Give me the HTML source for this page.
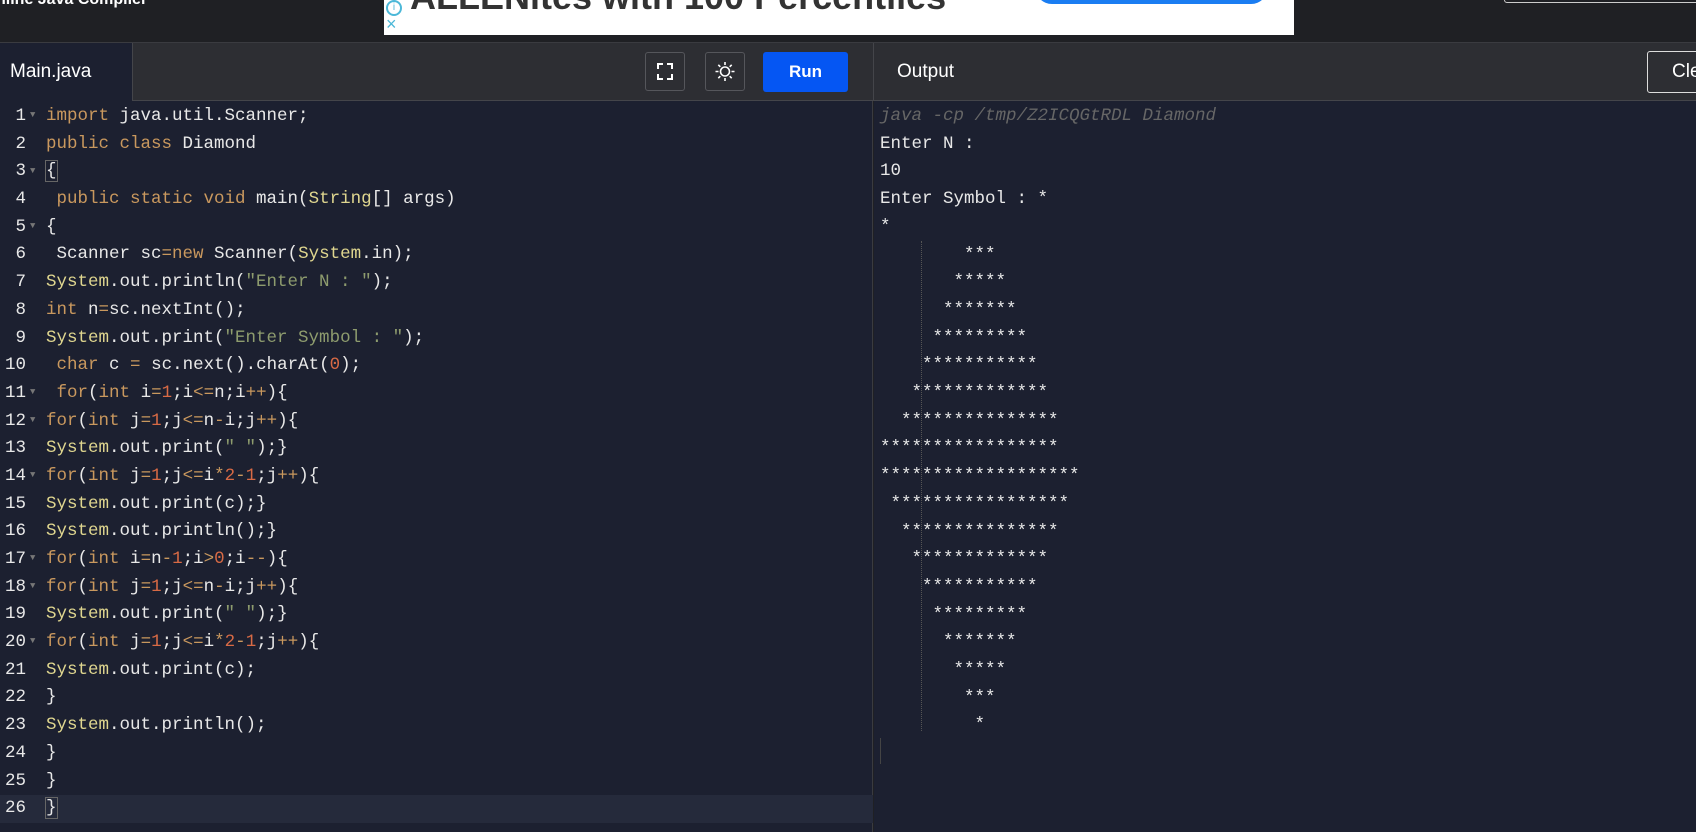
<!DOCTYPE html>
<html><head><meta charset="utf-8"><style>
*{margin:0;padding:0;box-sizing:border-box}
body{width:1696px;height:832px;overflow:hidden;background:#1f2024;font-family:"Liberation Sans",sans-serif;position:relative}
.top{position:absolute;left:0;top:0;width:1696px;height:43px;background:#1f2024;border-bottom:1px solid #3a3b40}
.ad{position:absolute;left:384px;top:0;width:910px;height:35px;background:#fff;overflow:hidden}
.hdr{position:absolute;top:43px;left:0;width:1696px;height:58px;background:#2d2e33;border-bottom:1px solid #44454a}
.tab{position:absolute;left:0;top:0;width:133px;height:58px;background:#1c2030;border-right:1px solid #44454a;color:#fff;font-size:19px;line-height:58px;padding-left:10px}
.btn{position:absolute;top:9px;width:40px;height:39px;border:1px solid #55565b;border-radius:3px;background:#2d2e33}
.run{position:absolute;left:763px;top:9px;width:85px;height:40px;background:#0556f3;border-radius:3px;color:#fff;font-weight:bold;font-size:17px;text-align:center;line-height:40px}
.ed{position:absolute;left:0;top:101px;width:873px;height:731px;background:#1c2030;border-right:1px solid #3a3b40}
.out{position:absolute;left:874px;top:101px;width:822px;height:731px;background:#1c2030}
.code{position:absolute;left:0;top:2px;font-family:"Liberation Mono",monospace;font-size:17.5px;line-height:27.7px;color:#e8e8e8}
.ln{display:inline-block;width:26px;text-align:right;color:#e8e8e8}
.f{display:inline-block;width:20px;color:#777;font-size:9px;padding-left:4px;vertical-align:middle;line-height:10px}
.k{color:#c9985e}.s{color:#8e9c6e}.n{color:#d86a45}.y{color:#dfd68f}
.row{height:27.7px;white-space:pre}
.act{background:#252a3b}
.o{position:absolute;left:6px;top:2px;font-family:"Liberation Mono",monospace;font-size:17.5px;line-height:27.7px;color:#e8e8e8;white-space:pre}
</style></head><body>
<div class="top">
<div style="position:absolute;left:-4px;top:-9px;color:#fff;font-size:16px;font-weight:bold">nline Java Compiler</div>
<div class="ad">
<div style="position:absolute;left:2px;top:0;width:16px;height:16px;border-radius:50%;border:2px solid #4cb8d8;color:#4cb8d8;font-size:10px;text-align:center;line-height:12px">i</div>
<div style="position:absolute;left:2px;top:14px;color:#4cb8d8;font-size:18px">×</div>
<div style="position:absolute;left:26px;top:-24px;color:#333;font-size:36px;font-weight:bold;white-space:nowrap">ALLENites with 100 Percentiles</div>
<div style="position:absolute;left:651px;top:-30px;width:233px;height:34px;border-radius:17px;background:#1a7df2"></div>
</div>
<div style="position:absolute;left:1504px;top:-10px;width:200px;height:13px;border:1px solid #ccc;border-radius:3px"></div>
</div>
<div class="hdr">
<div class="tab">Main.java</div>
<div class="btn" style="left:645px"><svg width="38" height="37" viewBox="0 0 38 37"><path d="M12 16v-5h5M21 11h5v5M26 21v5h-5M17 26h-5v-5" stroke="#fff" stroke-width="2" fill="none"/></svg></div>
<div class="btn" style="left:705px"><svg width="38" height="37" viewBox="0 0 38 37"><circle cx="19" cy="18.5" r="4.5" stroke="#fff" stroke-width="1.6" fill="none"/><path d="M19 9v3M19 25v3M9.5 18.5h3M25.5 18.5h3M12.3 11.8l2 2M23.7 23.2l2 2M12.3 25.2l2-2M23.7 13.8l2-2" stroke="#fff" stroke-width="1.6"/></svg></div>
<div class="run">Run</div>
<div style="position:absolute;left:873px;top:0;height:58px;border-left:1px solid #44454a"></div>
<div style="position:absolute;left:897px;top:0;line-height:58px;color:#fff;font-size:19px">Output</div>
<div style="position:absolute;left:1647px;top:8px;width:80px;height:42px;border:1px solid #ddd;border-radius:3px;color:#fff;font-size:19px;line-height:40px;padding-left:24px">Clear</div>
</div>
<div class="ed"><div class="code"><div class="row"><span class="ln">1</span><span class="f">▼</span><span class="k">import</span> java.util.Scanner;</div><div class="row"><span class="ln">2</span><span class="f"></span><span class="k">public class</span> Diamond</div><div class="row"><span class="ln">3</span><span class="f">▼</span><span style="outline:1px solid #666">{</span></div><div class="row"><span class="ln">4</span><span class="f"></span> <span class="k">public static void</span> main(<span class="y">String</span>[] args)</div><div class="row"><span class="ln">5</span><span class="f">▼</span>{</div><div class="row"><span class="ln">6</span><span class="f"></span> Scanner sc<span class="k">=new</span> Scanner(<span class="y">System</span>.in);</div><div class="row"><span class="ln">7</span><span class="f"></span><span class="y">System</span>.out.println(<span class="s">"Enter N : "</span>);</div><div class="row"><span class="ln">8</span><span class="f"></span><span class="k">int</span> n<span class="k">=</span>sc.nextInt();</div><div class="row"><span class="ln">9</span><span class="f"></span><span class="y">System</span>.out.print(<span class="s">"Enter Symbol : "</span>);</div><div class="row"><span class="ln">10</span><span class="f"></span> <span class="k">char</span> c <span class="k">=</span> sc.next().charAt(<span class="n">0</span>);</div><div class="row"><span class="ln">11</span><span class="f">▼</span> <span class="k">for</span>(<span class="k">int</span> i<span class="k">=</span><span class="n">1</span>;i<span class="k">&lt;=</span>n;i<span class="k">++</span>){</div><div class="row"><span class="ln">12</span><span class="f">▼</span><span class="k">for</span>(<span class="k">int</span> j<span class="k">=</span><span class="n">1</span>;j<span class="k">&lt;=</span>n<span class="k">-</span>i;j<span class="k">++</span>){</div><div class="row"><span class="ln">13</span><span class="f"></span><span class="y">System</span>.out.print(<span class="s">" "</span>);}</div><div class="row"><span class="ln">14</span><span class="f">▼</span><span class="k">for</span>(<span class="k">int</span> j<span class="k">=</span><span class="n">1</span>;j<span class="k">&lt;=</span>i<span class="k">*</span><span class="n">2</span><span class="k">-</span><span class="n">1</span>;j<span class="k">++</span>){</div><div class="row"><span class="ln">15</span><span class="f"></span><span class="y">System</span>.out.print(c);}</div><div class="row"><span class="ln">16</span><span class="f"></span><span class="y">System</span>.out.println();}</div><div class="row"><span class="ln">17</span><span class="f">▼</span><span class="k">for</span>(<span class="k">int</span> i<span class="k">=</span>n<span class="k">-</span><span class="n">1</span>;i<span class="k">&gt;</span><span class="n">0</span>;i<span class="k">--</span>){</div><div class="row"><span class="ln">18</span><span class="f">▼</span><span class="k">for</span>(<span class="k">int</span> j<span class="k">=</span><span class="n">1</span>;j<span class="k">&lt;=</span>n<span class="k">-</span>i;j<span class="k">++</span>){</div><div class="row"><span class="ln">19</span><span class="f"></span><span class="y">System</span>.out.print(<span class="s">" "</span>);}</div><div class="row"><span class="ln">20</span><span class="f">▼</span><span class="k">for</span>(<span class="k">int</span> j<span class="k">=</span><span class="n">1</span>;j<span class="k">&lt;=</span>i<span class="k">*</span><span class="n">2</span><span class="k">-</span><span class="n">1</span>;j<span class="k">++</span>){</div><div class="row"><span class="ln">21</span><span class="f"></span><span class="y">System</span>.out.print(c);</div><div class="row"><span class="ln">22</span><span class="f"></span>}</div><div class="row"><span class="ln">23</span><span class="f"></span><span class="y">System</span>.out.println();</div><div class="row"><span class="ln">24</span><span class="f"></span>}</div><div class="row"><span class="ln">25</span><span class="f"></span>}</div><div class="row act" style="width:873px"><span class="ln">26</span><span class="f"></span><span style="outline:1px solid #666">}</span></div></div></div>
<div class="out">
<div style="position:absolute;left:47px;top:140px;height:490px;border-left:1px dotted #555"></div>
<div class="o"><span style="color:#666;font-style:italic">java -cp /tmp/Z2ICQGtRDL Diamond</span>
Enter N : 
10
Enter Symbol : *
*
        ***
       *****
      *******
     *********
    ***********
   *************
  ***************
*****************
*******************
 *****************
  ***************
   *************
    ***********
     *********
      *******
       *****
        ***
         *
</div>
<div style="position:absolute;left:6px;top:637px;height:26px;border-left:1px solid #444"></div>
</div>
</body></html>
